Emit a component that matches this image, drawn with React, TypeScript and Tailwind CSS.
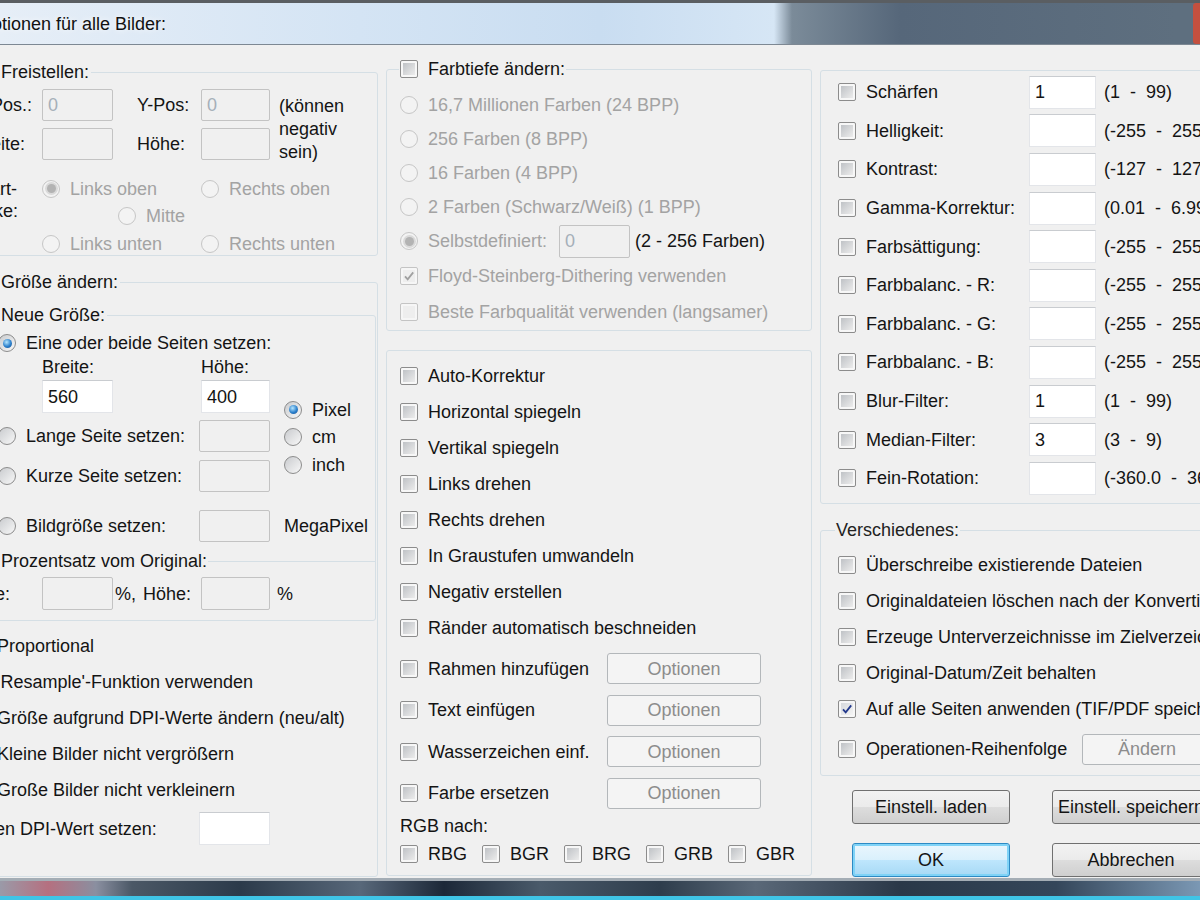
import clsx from "clsx";
import type { ReactNode } from "react";

// disabled text colour used across the dialog
const GRAY = "text-[#a3a3a3]";

function Check({ on = false, off = false }: { on?: boolean; off?: boolean }) {
  return (
    <span
      className={clsx(
        "flex h-[18px] w-[18px] shrink-0 rounded-[2px] border p-[2px]",
        off ? "border-[#c4c4c4] bg-[#f6f6f6]" : "border-[#8c8c8c] bg-[#f7f7f7]"
      )}
    >
      <span
        className={clsx(
          "flex h-full w-full items-center justify-center",
          off
            ? "bg-[#eeeeee]"
            : on
            ? "bg-[linear-gradient(135deg,#d6d9dd,#f4f4f4)]"
            : "bg-[linear-gradient(135deg,#bfc2c6,#ececec)]"
        )}
      >
        {on && (
          <svg viewBox="0 0 12 12" className="h-[12px] w-[12px]">
            <path
              d="M2 6.3 L4.7 9.4 L10.2 2.4"
              fill="none"
              stroke={off ? "#a0a0a0" : "#23398c"}
              strokeWidth="1.8"
            />
          </svg>
        )}
      </span>
    </span>
  );
}

function Radio({ on = false, off = false }: { on?: boolean; off?: boolean }) {
  return (
    <span
      className={clsx(
        "flex h-[18px] w-[18px] shrink-0 items-center justify-center rounded-full border",
        off
          ? "border-[#c6c6c6] bg-[#f3f3f3]"
          : "border-[#8c8c8c] bg-[linear-gradient(135deg,#c9cbce,#f8f8f8)]"
      )}
    >
      {on && (
        <span
          className={clsx(
            "h-[9px] w-[9px] rounded-full",
            off
              ? "bg-[#b3b3b3] ring-2 ring-[#dadada]"
              : "bg-[radial-gradient(circle_at_40%_35%,#b5e6ff,#2b80cc_55%,#174a8c)]"
          )}
        />
      )}
    </span>
  );
}

function CheckItem({
  label,
  on,
  off,
  className,
}: {
  label: string;
  on?: boolean;
  off?: boolean;
  className?: string;
}) {
  return (
    <div className={clsx("flex shrink-0 items-center gap-[10px]", className)}>
      <Check on={on} off={off} />
      <span className={clsx("whitespace-nowrap", off && GRAY)}>{label}</span>
    </div>
  );
}

function RadioItem({
  label,
  on,
  off,
  className,
}: {
  label: string;
  on?: boolean;
  off?: boolean;
  className?: string;
}) {
  return (
    <div className={clsx("flex shrink-0 items-center gap-[10px]", className)}>
      <Radio on={on} off={off} />
      <span className={clsx("whitespace-nowrap", off && GRAY)}>{label}</span>
    </div>
  );
}

function Field({
  value = "",
  off,
  className,
}: {
  value?: string;
  off?: boolean;
  className?: string;
}) {
  return (
    <div
      className={clsx(
        "flex shrink-0 items-center pl-[5px]",
        off
          ? "rounded-[2px] border border-[#c3c3c3] text-[#a5afb9]"
          : "border border-[#e3e5e9] border-t-[#c9ccd0] bg-white",
        className
      )}
    >
      {value}
    </div>
  );
}

function Btn({
  children,
  off,
  focus,
  className,
}: {
  children: ReactNode;
  off?: boolean;
  focus?: boolean;
  className?: string;
}) {
  return (
    <div
      className={clsx(
        "flex shrink-0 items-center justify-center rounded-[3px] border whitespace-nowrap",
        off && "border-[#b3b7ba] bg-[#f4f4f4] text-[#8c8c8c]",
        focus &&
          "border-[#2d8ac4] bg-[linear-gradient(#eaf6fd_0%,#d9f0fc_50%,#bee6fd_50%,#a7d9f5_100%)] shadow-[inset_0_0_0_2px_#7fd3f7]",
        !off &&
          !focus &&
          "border-[#707070] bg-[linear-gradient(#f2f2f2_0%,#ebebeb_50%,#dddddd_50%,#cfcfcf_100%)]",
        className
      )}
    >
      {children}
    </div>
  );
}

const groupCls = "min-w-0 rounded-[3px] border border-[#d5dfe5]";

function LeftColumn() {
  return (
    <div className="ml-[-40px] flex w-[418px] shrink-0 flex-col">
      {/* Freistellen */}
      <fieldset className={clsx(groupCls, "mt-[16px] h-[195px]")}>
        <legend className="ml-[38px] px-[2px]">Freistellen:</legend>
        <div className="pl-[12px] pt-[6px]">
          <div className="flex">
            <div className="flex flex-col gap-[7px]">
              <div className="flex h-[32px] items-center">
                <span className="w-[69px]">X-Pos.:</span>
                <Field off value="0" className="h-[32px] w-[71px]" />
                <span className="ml-[24px] w-[64px]">Y-Pos:</span>
                <Field off value="0" className="h-[32px] w-[69px]" />
              </div>
              <div className="flex h-[32px] items-center">
                <span className="w-[69px]">Breite:</span>
                <Field off className="h-[32px] w-[71px]" />
                <span className="ml-[24px] w-[64px]">Höhe:</span>
                <Field off className="h-[32px] w-[69px]" />
              </div>
            </div>
            <div className="ml-[9px] pt-[6px] leading-[23px]">
              (können
              <br />
              negativ
              <br />
              sein)
            </div>
          </div>
          <div className="mt-[11px] flex">
            <div className="w-[69px] pt-[3px]">
              Start-
              <br />
              Ecke:
            </div>
            <div className="flex flex-col">
              <div className="flex h-[27px] items-center">
                <RadioItem on off label="Links oben" className="w-[159px]" />
                <RadioItem off label="Rechts oben" />
              </div>
              <div className="flex h-[28px] items-center pl-[76px]">
                <RadioItem off label="Mitte" />
              </div>
              <div className="flex h-[27px] items-center">
                <RadioItem off label="Links unten" className="w-[159px]" />
                <RadioItem off label="Rechts unten" />
              </div>
            </div>
          </div>
        </div>
      </fieldset>

      {/* Größe ändern */}
      <fieldset className={clsx(groupCls, "mt-[15px] h-[606px]")}>
        <legend className="ml-[38px] px-[2px]">Größe ändern:</legend>

        <fieldset className={clsx(groupCls, "mr-[1px] mt-[11px] h-[317px]")}>
          <legend className="ml-[37px] px-[2px]">Neue Größe:</legend>
          <div className="pt-[6px]">
            <div className="flex h-[22px] items-center pl-[36px]">
              <RadioItem on label="Eine oder beide Seiten setzen:" />
            </div>
            <div className="mt-[2px] flex h-[22px] items-center pl-[80px]">
              <span className="w-[159px]">Breite:</span>
              <span>Höhe:</span>
            </div>
            <div className="mt-[2px] flex">
              <div className="flex w-[322px] flex-col">
                <div className="flex h-[33px] items-center pl-[80px]">
                  <Field value="560" className="h-[33px] w-[71px]" />
                  <Field value="400" className="ml-[88px] h-[33px] w-[69px]" />
                </div>
                <div className="mt-[7px] flex h-[32px] items-center pl-[36px]">
                  <RadioItem label="Lange Seite setzen:" className="w-[201px]" />
                  <Field off className="h-[32px] w-[71px]" />
                </div>
                <div className="mt-[8px] flex h-[32px] items-center pl-[36px]">
                  <RadioItem label="Kurze Seite setzen:" className="w-[201px]" />
                  <Field off className="h-[32px] w-[71px]" />
                </div>
              </div>
              <div className="flex flex-col pt-[16px]">
                <div className="flex h-[27.5px] items-center">
                  <RadioItem on label="Pixel" />
                </div>
                <div className="flex h-[27.5px] items-center">
                  <RadioItem label="cm" />
                </div>
                <div className="flex h-[27.5px] items-center">
                  <RadioItem label="inch" />
                </div>
              </div>
            </div>
            <div className="mt-[18px] flex h-[32px] items-center pl-[36px]">
              <RadioItem label="Bildgröße setzen:" className="w-[201px]" />
              <Field off className="h-[32px] w-[71px]" />
              <span className="ml-[14px]">MegaPixel</span>
            </div>

            <fieldset className="mt-[8px] min-w-0 border-0 border-t border-[#d5dfe5]">
              <legend className="ml-[38px] px-[1px]">Prozentsatz vom Original:</legend>
              <div className="mt-[5px] flex h-[33px] items-center">
                <span className="ml-[-4px] w-[84px]">Breite:</span>
                <Field off className="h-[33px] w-[71px]" />
                <span className="w-[30px] pl-[2px]">%,</span>
                <span className="w-[58px]">Höhe:</span>
                <Field off className="h-[33px] w-[69px]" />
                <span className="ml-[7px]">%</span>
              </div>
            </fieldset>
          </div>
        </fieldset>

        <div className="mt-[7px] flex flex-col pl-[8px]">
          {[
            "Proportional",
            "'Resample'-Funktion verwenden",
            "Größe aufgrund DPI-Werte ändern (neu/alt)",
            "Kleine Bilder nicht vergrößern",
            "Große Bilder nicht verkleinern",
          ].map((t) => (
            <div key={t} className="flex h-[36px] items-center">
              <CheckItem label={t} />
            </div>
          ))}
        </div>
        <div className="mt-[4px] flex h-[33px] items-center pl-[1px]">
          <span className="w-[237px] whitespace-nowrap">Neuen DPI-Wert setzen:</span>
          <Field className="h-[33px] w-[71px]" />
        </div>
      </fieldset>
    </div>
  );
}

function MiddleColumn() {
  const effects = [
    "Auto-Korrektur",
    "Horizontal spiegeln",
    "Vertikal spiegeln",
    "Links drehen",
    "Rechts drehen",
    "In Graustufen umwandeln",
    "Negativ erstellen",
    "Ränder automatisch beschneiden",
  ];
  const withOptions = ["Rahmen hinzufügen", "Text einfügen", "Wasserzeichen einf.", "Farbe ersetzen"];

  return (
    <div className="ml-[8px] flex w-[426px] shrink-0 flex-col">
      <fieldset className={clsx(groupCls, "mt-[13px] h-[273px]")}>
        <legend className="ml-[12px] flex items-center gap-[10px] px-[1px]">
          <Check />
          <span>Farbtiefe ändern:</span>
        </legend>
        <div className="pl-[13px] pt-[8px]">
          {[
            "16,7 Millionen Farben (24 BPP)",
            "256 Farben (8 BPP)",
            "16 Farben (4 BPP)",
            "2 Farben (Schwarz/Weiß) (1 BPP)",
          ].map((t) => (
            <div key={t} className="flex h-[34px] items-center">
              <RadioItem off label={t} />
            </div>
          ))}
          <div className="flex h-[34px] items-center">
            <RadioItem on off label="Selbstdefiniert:" className="w-[159px]" />
            <Field off value="0" className="h-[33px] w-[71px]" />
            <span className="ml-[5px] whitespace-nowrap">(2 - 256 Farben)</span>
          </div>
          <div className="flex h-[36px] items-center">
            <CheckItem on off label="Floyd-Steinberg-Dithering verwenden" />
          </div>
          <div className="flex h-[36px] items-center">
            <CheckItem off label="Beste Farbqualität verwenden (langsamer)" />
          </div>
        </div>
      </fieldset>

      <fieldset className={clsx(groupCls, "mt-[19px] h-[526px]")}>
        <div className="pl-[13px] pt-[7px]">
          {effects.map((t) => (
            <div key={t} className="flex h-[36px] items-center">
              <CheckItem label={t} />
            </div>
          ))}
          <div className="mt-[2px]">
            {withOptions.map((t) => (
              <div key={t} className="flex h-[41.5px] items-center">
                <CheckItem label={t} className="w-[207px]" />
                <Btn off className="h-[31px] w-[154px]">
                  Optionen
                </Btn>
              </div>
            ))}
          </div>
          <div className="mt-[1px] h-[22px]">RGB nach:</div>
          <div className="mt-[5px] flex h-[24px] items-center">
            {["RBG", "BGR", "BRG", "GRB", "GBR"].map((t) => (
              <CheckItem key={t} label={t} className="w-[82px]" />
            ))}
          </div>
        </div>
      </fieldset>
    </div>
  );
}

function RightColumn() {
  const filters: [string, string, string][] = [
    ["Schärfen", "1", "(1  -  99)"],
    ["Helligkeit:", "", "(-255  -  255)"],
    ["Kontrast:", "", "(-127  -  127)"],
    ["Gamma-Korrektur:", "", "(0.01  -  6.99)"],
    ["Farbsättigung:", "", "(-255  -  255)"],
    ["Farbbalanc. - R:", "", "(-255  -  255)"],
    ["Farbbalanc. - G:", "", "(-255  -  255)"],
    ["Farbbalanc. - B:", "", "(-255  -  255)"],
    ["Blur-Filter:", "1", "(1  -  99)"],
    ["Median-Filter:", "3", "(3  -  9)"],
    ["Fein-Rotation:", "", "(-360.0  -  360.0)"],
  ];
  const misc: [string, boolean][] = [
    ["Überschreibe existierende Dateien", false],
    ["Originaldateien löschen nach der Konvertierung", false],
    ["Erzeuge Unterverzeichnisse im Zielverzeichnis", false],
    ["Original-Datum/Zeit behalten", false],
    ["Auf alle Seiten anwenden (TIF/PDF speichern)", true],
  ];

  return (
    <div className="ml-[8px] flex w-[420px] shrink-0 flex-col">
      <fieldset className={clsx(groupCls, "mt-[25px] h-[434px]")}>
        <div className="pl-[17px] pt-[2px]">
          {filters.map(([label, value, range]) => (
            <div key={label} className="flex h-[38.6px] items-center">
              <CheckItem label={label} className="w-[191px]" />
              <Field value={value} className="h-[33px] w-[67px]" />
              <span className="ml-[8px] whitespace-pre">{range}</span>
            </div>
          ))}
        </div>
      </fieldset>

      <fieldset className={clsx(groupCls, "mt-[15px] h-[257px]")}>
        <legend className="ml-[14px] px-[1px] text-[#222]">Verschiedenes:</legend>
        <div className="pl-[17px] pt-[6px]">
          {misc.map(([label, on]) => (
            <div key={label} className="flex h-[36px] items-center">
              <CheckItem label={label} on={on} />
            </div>
          ))}
          <div className="flex h-[44px] items-center">
            <CheckItem label="Operationen-Reihenfolge" className="w-[244px]" />
            <Btn off className="h-[31px] w-[130px]">
              Ändern
            </Btn>
          </div>
        </div>
      </fieldset>

      <div className="mt-[14px] flex gap-[42px] pl-[32px]">
        <Btn className="h-[34px] w-[158px]">Einstell. laden</Btn>
        <Btn className="h-[34px] w-[158px]">Einstell. speichern</Btn>
      </div>
      <div className="mt-[19px] flex gap-[42px] pl-[32px]">
        <Btn focus className="h-[34px] w-[158px]">
          OK
        </Btn>
        <Btn className="h-[34px] w-[158px]">Abbrechen</Btn>
      </div>
    </div>
  );
}

export default function App() {
  return (
    <div className="flex h-[900px] w-[1200px] flex-col overflow-hidden bg-[#f0f0f0] font-['Liberation_Sans',Arial,sans-serif] text-[18px] leading-[22px] text-[#141414]">
      {/* window title, glass frame */}
      <div className="flex h-[45px] shrink-0 items-center border-t-[3px] border-b border-t-[#5a5e62] border-b-[#7d8893] bg-[linear-gradient(to_right,#e6eef7_0%,#d4e4f4_30%,#c9ddf1_50%,#d6e6f5_64.5%,#7b8b99_66%,#56677a_75%,#5e6f7f_98%)]">
        <span className="ml-[-22px] whitespace-nowrap text-[#111] [text-shadow:0_0_6px_#ffffff]">
          Optionen für alle Bilder:
        </span>
        <span className="ml-auto h-full w-[7px] rounded-l-[3px] bg-[#c4503f]" />
      </div>

      <div className="flex h-[833px] shrink-0">
        <LeftColumn />
        <MiddleColumn />
        <RightColumn />
      </div>

      {/* desktop / taskbar visible under the dialog */}
      <div className="h-[22px] shrink-0 border-t-[3px] border-b-4 border-t-[#a4adb5] border-b-[#3fc4e6] bg-[linear-gradient(to_right,#9a9aa8_0%,#b57080_4%,#8a8fa0_8%,#4b5866_11%,#2b3a4a_20%,#58687a_30%,#1c2838_37%,#4a5a6a_45%,#2e3d4c_55%,#5a6878_63%,#2a3848_75%,#34465a_88%,#7b98b4_100%)]" />
    </div>
  );
}
